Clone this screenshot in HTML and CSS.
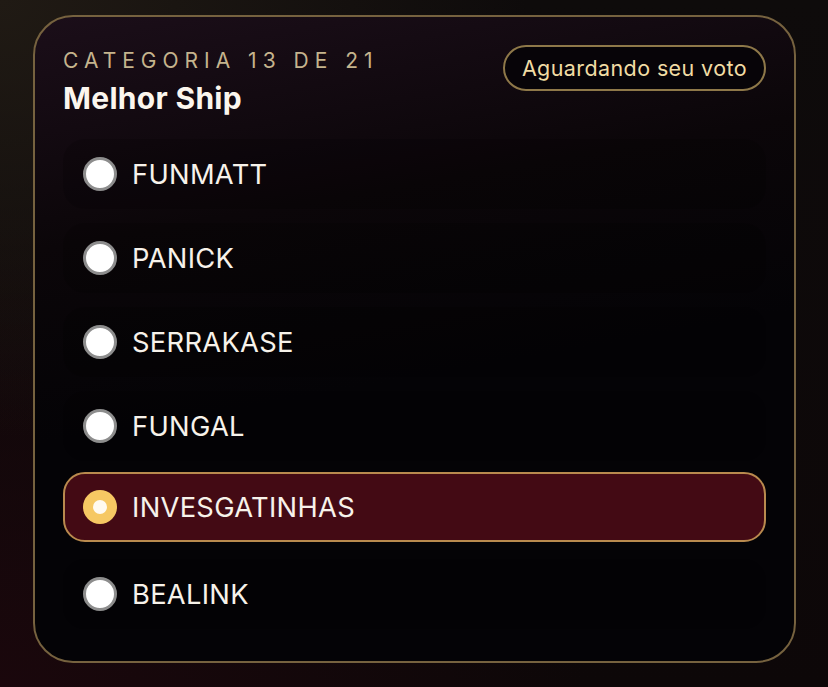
FILE: index.html
```html
<!DOCTYPE html>
<html lang="pt">
<head>
<meta charset="utf-8">
<title>Melhor Ship</title>
<link rel="stylesheet" href="styles.css">
</head>
<body>
<main class="page">
  <section class="card">
    <header class="card-head">
      <div class="titles">
        <div class="eyebrow">CATEGORIA 13 DE 21</div>
        <h1 class="title">Melhor Ship</h1>
      </div>
      <span class="badge">Aguardando seu voto</span>
    </header>
    <ul class="options">
      <li class="option"><span class="radio"></span><span class="label">FUNMATT</span></li>
      <li class="option"><span class="radio"></span><span class="label">PANICK</span></li>
      <li class="option"><span class="radio"></span><span class="label">SERRAKASE</span></li>
      <li class="option"><span class="radio"></span><span class="label">FUNGAL</span></li>
      <li class="option selected"><span class="radio"></span><span class="label">INVESGATINHAS</span></li>
      <li class="option"><span class="radio"></span><span class="label">BEALINK</span></li>
    </ul>
  </section>
</main>
</body>
</html>
```

FILE: styles.css
```css
* { box-sizing: border-box; }
html, body { margin: 0; padding: 0; }
body {
  width: 828px;
  height: 687px;
  overflow: hidden;
  font-family: "Inter", "Liberation Sans", sans-serif;
  background:
    radial-gradient(ellipse at 0% 0%, #201a14 0%, rgba(32,26,20,0) 45%),
    radial-gradient(ellipse at 0% 100%, #1a070c 0%, rgba(26,7,12,0) 50%),
    linear-gradient(180deg, #0e0b0b 0%, #0d0708 100%);
}
.page {
  padding: 15px 33px 25px 33px;
}
.card {
  width: 763px;
  height: 648px;
  border: 2px solid #76623f;
  border-radius: 40px;
  padding: 28px 28px 0 28px;
  background:
    linear-gradient(170deg, #1b0e19 0%, #0b0609 30%, #040306 55%, #040306 100%);
}
.card-head {
  display: flex;
  justify-content: space-between;
  align-items: flex-start;
  height: 94px;
}
.titles { padding-top: 3px; }
.eyebrow {
  color: #c5b48d;
  font-size: 21px;
  letter-spacing: 6px;
  line-height: 26px;
  font-weight: 400;
}
.title {
  margin: 7px 0 0 0;
  color: #fbf6ee;
  font-size: 30px;
  line-height: 34px;
  font-weight: 700;
  letter-spacing: 0.3px;
}
.badge {
  margin-top: 0;
  height: 46px;
  padding: 0 17px;
  border: 2px solid #8e7849;
  border-radius: 23px;
  display: flex;
  align-items: center;
  color: #f1dca4;
  font-size: 21.5px;
  letter-spacing: 0.4px;
  background: #070408;
}
.options {
  list-style: none;
  margin: 0;
  padding: 0;
  display: flex;
  flex-direction: column;
  gap: 14px;
}
.option {
  height: 70px;
  border-radius: 22px;
  display: flex;
  align-items: center;
  gap: 15px;
  padding-left: 18px;
  background: rgba(0,0,0,0.15);
  border: 2px solid transparent;
}
.radio {
  width: 34px;
  height: 34px;
  border-radius: 50%;
  background: #ffffff;
  border: 3px solid #8d8d8d;
  flex: none;
  display: flex;
  align-items: center;
  justify-content: center;
}
.label {
  color: #f7f2ea;
  font-size: 27.3px;
  letter-spacing: 0.3px;
}
.option.selected {
  background: #430a14;
  border-color: #b98a4e;
  margin-top: -3px;
  margin-bottom: 3px;
}
.option.selected .radio {
  background: #f6c863;
  border: none;
}
.option.selected .radio::after {
  content: "";
  width: 14px;
  height: 14px;
  border-radius: 50%;
  background: #fffaf0;
}
```
